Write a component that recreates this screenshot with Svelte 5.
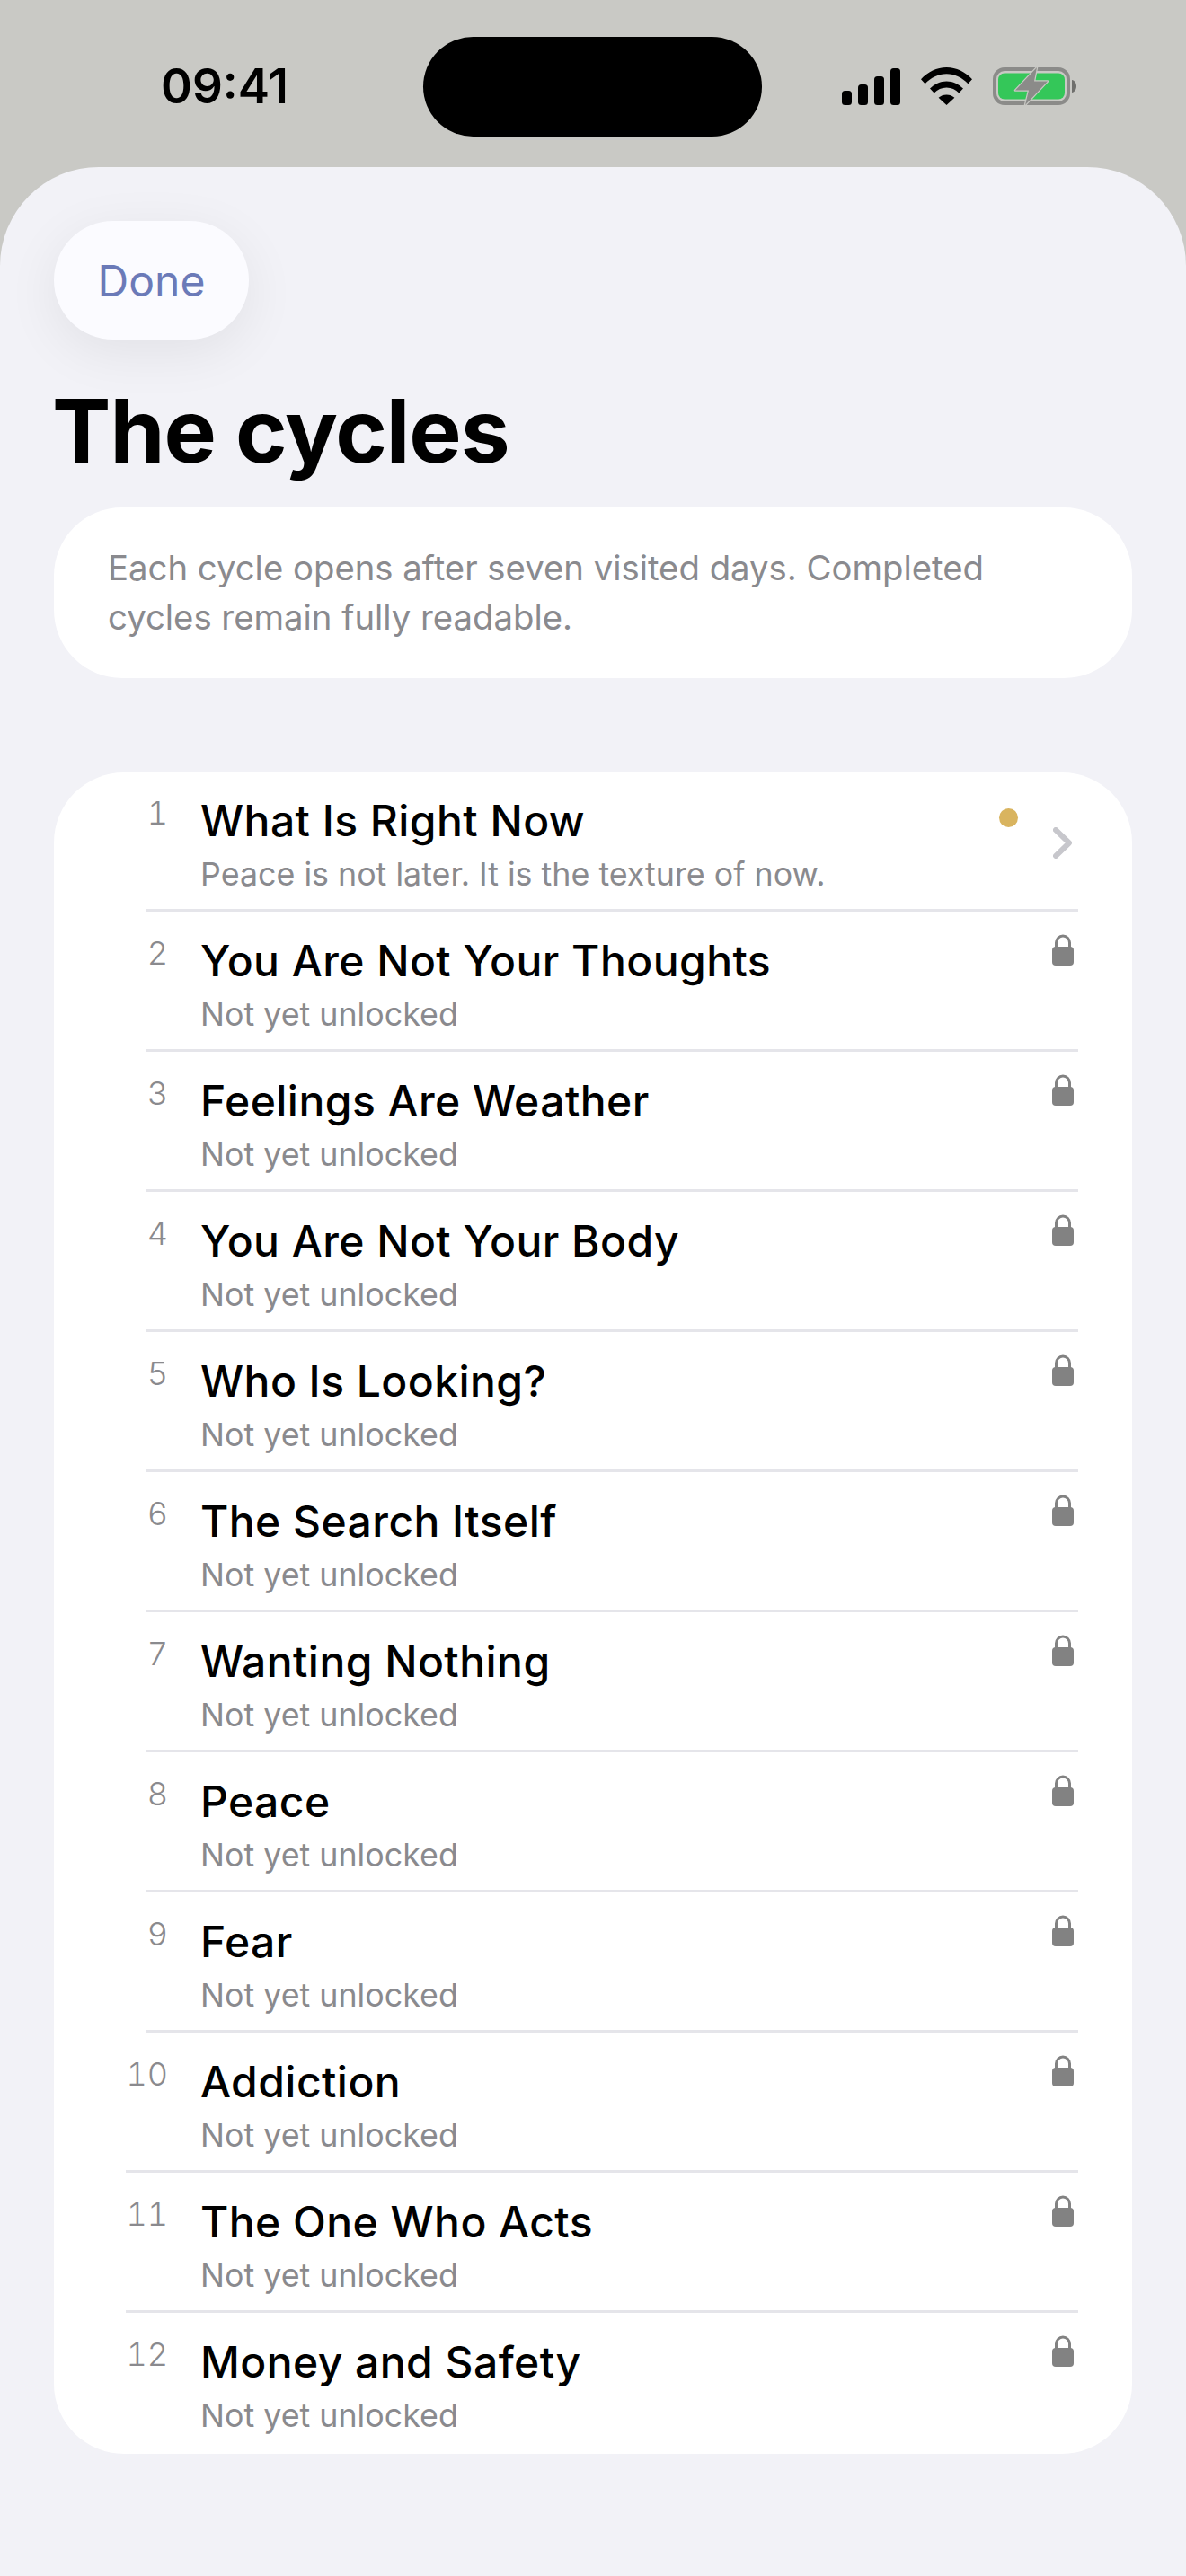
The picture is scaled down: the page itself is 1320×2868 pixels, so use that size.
<script>
  const cycles = [
    { title: 'What Is Right Now', note: 'Peace is not later. It is the texture of now.', open: true },
    { title: 'You Are Not Your Thoughts' },
    { title: 'Feelings Are Weather' },
    { title: 'You Are Not Your Body' },
    { title: 'Who Is Looking?' },
    { title: 'The Search Itself' },
    { title: 'Wanting Nothing' },
    { title: 'Peace' },
    { title: 'Fear' },
    { title: 'Addiction' },
    { title: 'The One Who Acts' },
    { title: 'Money and Safety' }
  ];
</script>

<div class="screen">
  <header class="status">
    <span class="time">09:41</span>
    <div class="island"></div>
    <div class="indicators">
      <svg class="cell" width="65" height="41" viewBox="0 0 65 41" fill="#000">
        <rect x="0" y="25" width="11" height="16" rx="3.5" />
        <rect x="18" y="18" width="11" height="23" rx="3.5" />
        <rect x="36" y="9" width="11" height="32" rx="3.5" />
        <rect x="54" y="0" width="11" height="41" rx="3.5" />
      </svg>
      <svg class="wifi" width="57" height="42" viewBox="0 0 57 42" fill="#000">
        <path d="M0 13.2C7.6 5 17.6 0 28.5 0S49.4 5 57 13.2l-4.6 5C46 11.4 37.7 7.2 28.5 7.2S11 11.4 4.6 18.2z" />
        <path d="M10 23.6C14.8 18.6 21.3 15.4 28.5 15.4S42.2 18.6 47 23.6l-4.7 5C38.6 24.9 33.8 22.6 28.5 22.6S18.4 24.9 14.7 28.6z" />
        <path d="M19.6 33.7C22 31.6 25.1 30.4 28.5 30.4S35 31.6 37.4 33.7L28.5 42z" />
      </svg>
      <svg class="battery" width="93" height="44" viewBox="0 0 93 44">
        <rect x="2" y="3" width="82" height="38" rx="11" fill="none" stroke="#8b8b89" stroke-width="4" />
        <rect x="6" y="7.500" width="74" height="29" rx="7" fill="#34c759" />
        <path d="M88 15c3 .6 5 3.300 5 7s-2 6.400-5 7z" fill="#6f6f6d" />
        <path d="M49 1 25 26.500h15L36 43 61 16.500H46z" fill="#8b8b89" stroke="#c9c9c5" stroke-width="2.500" stroke-linejoin="round" paint-order="stroke" />
      </svg>
    </div>
  </header>

  <main class="sheet">
    <button class="done">Done</button>
    <h1>The cycles</h1>
    <p class="intro">Each cycle opens after seven visited days. Completed cycles remain fully readable.</p>

    <ul class="list">
      {#each cycles as cycle, i}
        <li class="row">
          <span class="num">{i + 1}</span>
          <div class="body">
            <div class="copy">
              <div class="title">{cycle.title}</div>
              <div class="note">{cycle.note ?? 'Not yet unlocked'}</div>
            </div>
            {#if cycle.open}
              <span class="dot"></span>
              <svg class="chevron" width="21" height="35" viewBox="0 0 21 35">
                <path d="M3 3l15 14.500L3 32" fill="none" stroke="#c7c7cc" stroke-width="6" stroke-linecap="round" stroke-linejoin="round" />
              </svg>
            {:else}
              <svg class="lock" width="24" height="35" viewBox="0 0 24 35">
                <path d="M4.500 16V9.500a7.500 7.500 0 0 1 15 0V16" fill="none" stroke="#828282" stroke-width="3" />
                <rect x="0" y="14" width="24" height="21" rx="4" fill="#828282" />
              </svg>
            {/if}
          </div>
        </li>
      {/each}
    </ul>
  </main>
</div>

<style>
  :global(body) {
    margin: 0;
    background: #f2f2f7;
  }

  .screen {
    width: 1320px;
    height: 2868px;
    overflow: hidden;
    background: #c9c9c5;
    font-family: Inter, "Liberation Sans", sans-serif;
  }

  .status {
    height: 186px;
    box-sizing: border-box;
    padding-top: 41px;
    display: grid;
    grid-template-columns: 471px 377px 1fr;
    align-items: start;
  }

  .time {
    height: 111px;
    line-height: 111px;
    padding-left: 179px;
    font-size: 53px;
    font-weight: 600;
    color: #000;
  }

  .island {
    height: 111px;
    border-radius: 56px;
    background: #000;
  }

  .indicators {
    display: flex;
    align-items: flex-start;
    padding: 34px 0 0 89px;
  }

  .cell { margin-top: 1px; }
  .wifi { margin-left: 23px; }
  .battery { margin-left: 23px; margin-top: -1px; }

  .sheet {
    height: 2682px;
    box-sizing: border-box;
    padding: 60px 60px 0;
    background: #f2f2f7;
    border-radius: 110px 110px 0 0;
    overflow: hidden;
  }

  .done {
    display: block;
    width: 217px;
    height: 132px;
    padding: 0;
    border: none;
    border-radius: 66px;
    background: #fbfbff;
    box-shadow: 0 14px 60px rgba(0, 0, 0, 0.07);
    color: #6b7ab8;
    font: 400 48px Inter, "Liberation Sans", sans-serif;
  }

  h1 {
    margin: 42px 0 25px -2px;
    font-size: 98px;
    line-height: 120px;
    font-weight: 700;
    letter-spacing: -1px;
    color: #000;
  }

  .intro {
    margin: 0;
    height: 190px;
    box-sizing: border-box;
    padding: 40px 100px 0 60px;
    border-radius: 76px;
    background: #fff;
    font-size: 38.300px;
    line-height: 55px;
    color: #8a8a8e;
  }

  .list {
    list-style: none;
    margin: 105px 0 0;
    padding: 0;
    background: #fff;
    border-radius: 78px;
    overflow: hidden;
  }

  .row {
    height: 156px;
    display: flex;
    padding-right: 60px;
    box-sizing: border-box;
    position: relative;
  }

  .num {
    width: 127px;
    flex: none;
    padding-top: 24px;
    text-align: right;
    font-size: 36px;
    line-height: 42px;
    font-weight: 300;
    font-variant-numeric: tabular-nums;
    color: #8a8a8e;
  }

  .body {
    flex: 1;
    display: flex;
    padding-left: 36px;
  }

  .copy { flex: 1; }

  .title {
    padding-top: 25px;
    font-size: 48px;
    line-height: 58px;
    font-weight: 500;
    letter-spacing: 0.45px;
    color: #000;
  }

  .note {
    margin-top: 8px;
    font-size: 35.800px;
    line-height: 44px;
    color: #8a8a8e;
  }

  .dot {
    width: 21px;
    height: 21px;
    margin-top: 40px;
    margin-right: 39px;
    border-radius: 50%;
    background: #d9b45f;
  }

  .chevron {
    margin-top: 61px;
    margin-right: 7px;
  }

  .lock {
    margin-top: 24px;
    margin-right: 5px;
  }

  .row:not(:last-child)::after {
    content: '';
    position: absolute;
    left: 103px;
    right: 60px;
    bottom: 1px;
    height: 3px;
    background: #e5e5ea;
  }

  .row:nth-child(n+10):not(:last-child)::after {
    left: 80px;
  }
</style>
